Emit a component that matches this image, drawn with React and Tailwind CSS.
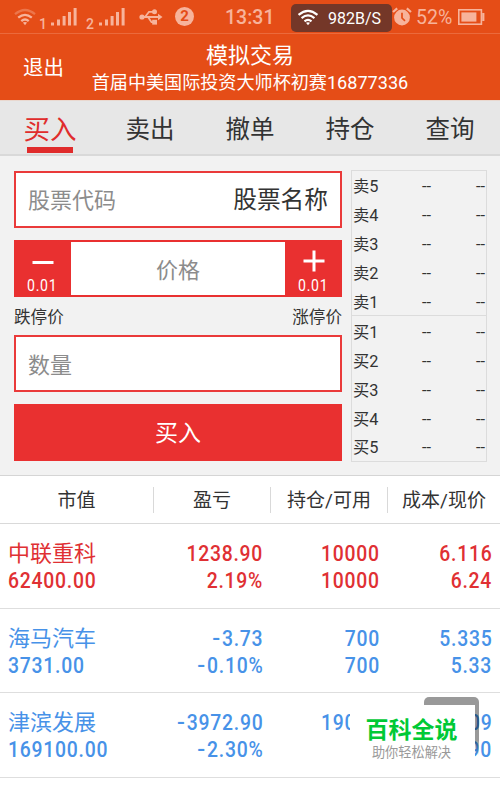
import clsx from "clsx";

const tabs = ["买入", "卖出", "撤单", "持仓", "查询"];

const sellQuotes = ["卖5", "卖4", "卖3", "卖2", "卖1"];
const buyQuotes = ["买1", "买2", "买3", "买4", "买5"];

const positions = [
  {
    name: "中联重科",
    value: "62400.00",
    profit: "1238.90",
    rate: "2.19%",
    held: "10000",
    usable: "10000",
    cost: "6.116",
    price: "6.24",
    up: true,
  },
  {
    name: "海马汽车",
    value: "3731.00",
    profit: "-3.73",
    rate: "-0.10%",
    held: "700",
    usable: "700",
    cost: "5.335",
    price: "5.33",
  },
  {
    name: "津滨发展",
    value: "169100.00",
    profit: "-3972.90",
    rate: "-2.30%",
    held: "19000",
    usable: "0",
    cost: "9.109",
    price: "8.90",
  },
];

function WifiIcon({ className, faded }) {
  return (
    <svg viewBox="0 0 22 18" className={className} fill="none" stroke="currentColor" strokeWidth="2.3">
      <path d="M1 6.2Q11 -2.2 21 6.2" opacity={faded ? 0.4 : 1} />
      <path d="M4.2 9.7Q11 4 17.8 9.7" />
      <path d="M7.3 13.1Q11 10 14.7 13.1" />
      <path d="M8.9 14.6Q11 13.2 13.1 14.6L11 17.2Z" fill="currentColor" stroke="none" />
    </svg>
  );
}

function SignalIcon() {
  return (
    <svg viewBox="0 0 26 18" className="w-[26px] h-[18px]" fill="currentColor">
      <rect x="0" y="14.5" width="3" height="3" />
      <rect x="6" y="11.5" width="3" height="6" />
      <rect x="11.6" y="8" width="3" height="9.5" />
      <rect x="17" y="4" width="3" height="13.5" />
      <rect x="22.6" y="0" width="3" height="17.5" />
    </svg>
  );
}

function UsbIcon() {
  return (
    <svg viewBox="0 0 24 16" className="w-6 h-4" fill="none" stroke="currentColor" strokeWidth="1.8">
      <path d="M3 8H20M6 8L10 2.8H14M9 8L12.5 13.2H15" />
      <circle cx="3" cy="8" r="2.6" fill="currentColor" stroke="none" />
      <path d="M19 4.8L23.5 8L19 11.2Z" fill="currentColor" stroke="none" />
      <circle cx="15.5" cy="2.8" r="2.5" fill="currentColor" stroke="none" />
      <rect x="13.2" y="10.8" width="4.8" height="4.8" fill="currentColor" stroke="none" />
    </svg>
  );
}

function AlarmIcon() {
  return (
    <svg viewBox="0 0 20 20" className="w-5 h-5" fill="none" stroke="currentColor">
      <circle cx="10" cy="10.5" r="7.9" fill="currentColor" stroke="none" />
      <path d="M1 5L5.2 1.4M19 5L14.8 1.4" strokeWidth="2.2" />
      <path d="M10 5.8V11L13 13.8" stroke="#e54d17" strokeWidth="1.7" />
    </svg>
  );
}

function BatteryIcon() {
  return (
    <svg viewBox="0 0 27 16" className="w-[27px] h-4" fill="currentColor">
      <rect x="0.8" y="0.8" width="22.6" height="14.4" fill="none" stroke="currentColor" strokeWidth="1.6" />
      <rect x="3.4" y="3.4" width="15" height="9.2" />
      <rect x="24.2" y="4" width="2.2" height="8" />
    </svg>
  );
}

function StatusBar() {
  return (
    <div className="flex items-center h-[34px] border-b border-[#eb6a3c] text-[#f7b39b]">
      <WifiIcon className="w-[22px] h-[18px] ml-[14px]" faded />
      <span className="ml-[3px] mt-[14px] w-[10px] text-[14px] leading-[14px] font-medium">1</span>
      <div className="ml-[2px]">
        <SignalIcon />
      </div>
      <span className="ml-[9px] mt-[14px] w-[9px] text-[14px] leading-[14px] font-medium">2</span>
      <div className="ml-[4px]">
        <SignalIcon />
      </div>
      <div className="ml-[14px]">
        <UsbIcon />
      </div>
      <span className="flex items-center justify-center ml-[12px] w-[19px] h-[19px] rounded-full bg-[#f7b39b] text-[#e54d17] text-[15px] leading-none font-bold">
        2
      </span>
      <span className="ml-[31px] w-[66px] text-[19.5px] leading-6 pt-[2px] font-medium">13:31</span>
      <div className="flex items-center w-[101px] h-[28px] mt-[2px] rounded-[5px] bg-[#743728] text-white pl-[6px]">
        <WifiIcon className="w-[22px] h-[17px]" />
        <span className="ml-[9px] text-[16px] leading-5 pt-[2px] whitespace-nowrap">982B/S</span>
      </div>
      <AlarmIcon />
      <span className="ml-[4px] w-[38px] text-[19.5px] leading-6 pt-[2px] whitespace-nowrap">52%</span>
      <div className="ml-[4px]">
        <BatteryIcon />
      </div>
    </div>
  );
}

function Quote({ label }) {
  return (
    <div className="flex items-center h-[28.9px] pt-[4px] pl-px pr-px text-[16.3px] leading-5">
      <span className="w-[69px]">{label}</span>
      <span className="flex-1">--</span>
      <span>--</span>
    </div>
  );
}

function Stepper({ plus }) {
  return (
    <button className="flex flex-col items-center w-[57px] bg-[#e93030] text-white">
      <svg viewBox="0 0 22 22" className="w-[22px] h-[22px] mt-[10px]" stroke="currentColor" strokeWidth="3">
        <path d={plus ? "M0.5 11H21.5M11 0.5V21.5" : "M0.5 12.5H21.5"} />
      </svg>
      <span className="mt-[5px] text-[16px] leading-[17px] tracking-[0.8px] scale-x-[0.88]">0.01</span>
    </button>
  );
}

// narrow figures with loose spacing, minus sign drawn a little wider
function Num({ children, left }) {
  const negative = children.startsWith("-");
  return (
    <span
      className={clsx(
        "block w-fit whitespace-nowrap font-medium scale-x-[0.88] tracking-[0.85px]",
        left ? "origin-left" : "origin-right ml-auto -mr-px"
      )}
    >
      {negative && <span className="inline-block scale-x-[1.2] mr-[2px]">-</span>}
      {negative ? children.slice(1) : children}
    </span>
  );
}

function Position({ item }) {
  return (
    <div
      className={clsx(
        "grid grid-cols-[152px_110px_117px_112px] content-start h-[84.7px] pt-4 border-b-[1.5px] border-[#dedede] text-[22px] leading-[27px]",
        item.up ? "text-[#e03033]" : "text-[#4792e8]"
      )}
    >
      <div className="pl-2">
        <div>{item.name}</div>
        <Num left>{item.value}</Num>
      </div>
      <div>
        <Num>{item.profit}</Num>
        <Num>{item.rate}</Num>
      </div>
      <div>
        <Num>{item.held}</Num>
        <Num>{item.usable}</Num>
      </div>
      <div>
        <Num>{item.cost}</Num>
        <Num>{item.price}</Num>
      </div>
    </div>
  );
}

export default function App() {
  return (
    <div className="relative w-[500px] h-[790px] overflow-hidden bg-white text-[#333] font-[Roboto,'Noto_Sans_CJK_SC',sans-serif]">
      <header className="h-[100px] bg-[#e54d17] text-white">
        <StatusBar />
        <div className="relative text-center pt-[8px]">
          <button className="absolute left-[23px] top-[20px] text-[20.5px] leading-7">退出</button>
          <h1 className="text-[22px] leading-7">模拟交易</h1>
          <p className="text-[18.1px] leading-[26px] whitespace-nowrap">首届中美国际投资大师杯初赛16877336</p>
        </div>
      </header>

      <nav className="grid grid-cols-5 h-[56px] bg-[#e7e7e7] border-t border-t-[#e9d8cf] border-b-2 border-b-[#d9d9d9]">
        {tabs.map((tab, idx) => (
          <div
            key={tab}
            className={clsx(
              "flex flex-col items-center leading-9",
              idx === 0 ? "pt-[11px] text-[#e02c2c] text-[26.5px]" : "pt-[11px] text-[24.5px]"
            )}
          >
            {tab}
            {idx === 0 && <div className="w-[46px] h-[6px] -mt-px bg-[#e02c2c]"></div>}
          </div>
        ))}
      </nav>

      <section className="flex h-[320px] pt-[14px] pl-[14px] pr-[13px] bg-[#f2f2f2] border-b border-[#d5d5d5]">
        <div className="w-[328px] pt-px">
          <div className="flex items-center justify-between h-[57px] border-2 border-[#ea3a3a] bg-white px-3 pt-[2px]">
            <span className="text-[22px] text-[#8c8c8c]">股票代码</span>
            <span className="text-[23.7px]">股票名称</span>
          </div>
          <div className="flex h-[57px] mt-[12px] bg-[#e93030]">
            <Stepper />
            <div className="flex flex-1 items-center justify-center my-[2px] pt-[3px] bg-white text-[22px] text-[#8c8c8c]">
              价格
            </div>
            <Stepper plus />
          </div>
          <div className="flex justify-between h-[38px] pt-[9px] text-[16.6px] leading-6">
            <span>跌停价</span>
            <span>涨停价</span>
          </div>
          <div className="flex items-center h-[57px] border-2 border-[#ea3a3a] bg-white px-3 pt-[3px] text-[22px] text-[#8c8c8c]">
            数量
          </div>
          <button className="block w-full h-[57px] mt-[12px] pt-[4px] bg-[#e93030] text-white text-[23px]">买入</button>
        </div>
        <div className="w-[136px] h-[292px] ml-[9px] border border-[#dcdcdc]">
          {sellQuotes.map((label) => (
            <Quote key={label} label={label} />
          ))}
          <div className="h-px bg-[#dcdcdc]"></div>
          {buyQuotes.map((label) => (
            <Quote key={label} label={label} />
          ))}
        </div>
      </section>

      <section>
        <div className="flex items-center h-[48px] border-b border-[#d9d9d9] text-[19px] text-center leading-[25px]">
          <div className="w-[154px] border-r border-[#d9d9d9] pt-px">市值</div>
          <div className="w-[117px] border-r border-[#d9d9d9] pt-px">盈亏</div>
          <div className="w-[117px] border-r border-[#d9d9d9] pt-px">持仓/可用</div>
          <div className="flex-1 pt-px">成本/现价</div>
        </div>
        {positions.map((item) => (
          <Position key={item.name} item={item} />
        ))}
      </section>

      <div className="absolute left-[424px] top-[697px] w-[55px] h-[58px] rounded-t-[5px] bg-linear-to-b from-black/40 from-75% to-transparent"></div>
      <div className="absolute left-[350px] top-[705px] w-[125px] h-[65px] bg-white pt-[11px] pr-[2px] text-center">
        <div className="text-[23px] leading-[30px] font-bold text-[#00c936]">百科全说</div>
        <div className="text-[13.2px] leading-[13px] text-[#999]">助你轻松解决</div>
      </div>
    </div>
  );
}
